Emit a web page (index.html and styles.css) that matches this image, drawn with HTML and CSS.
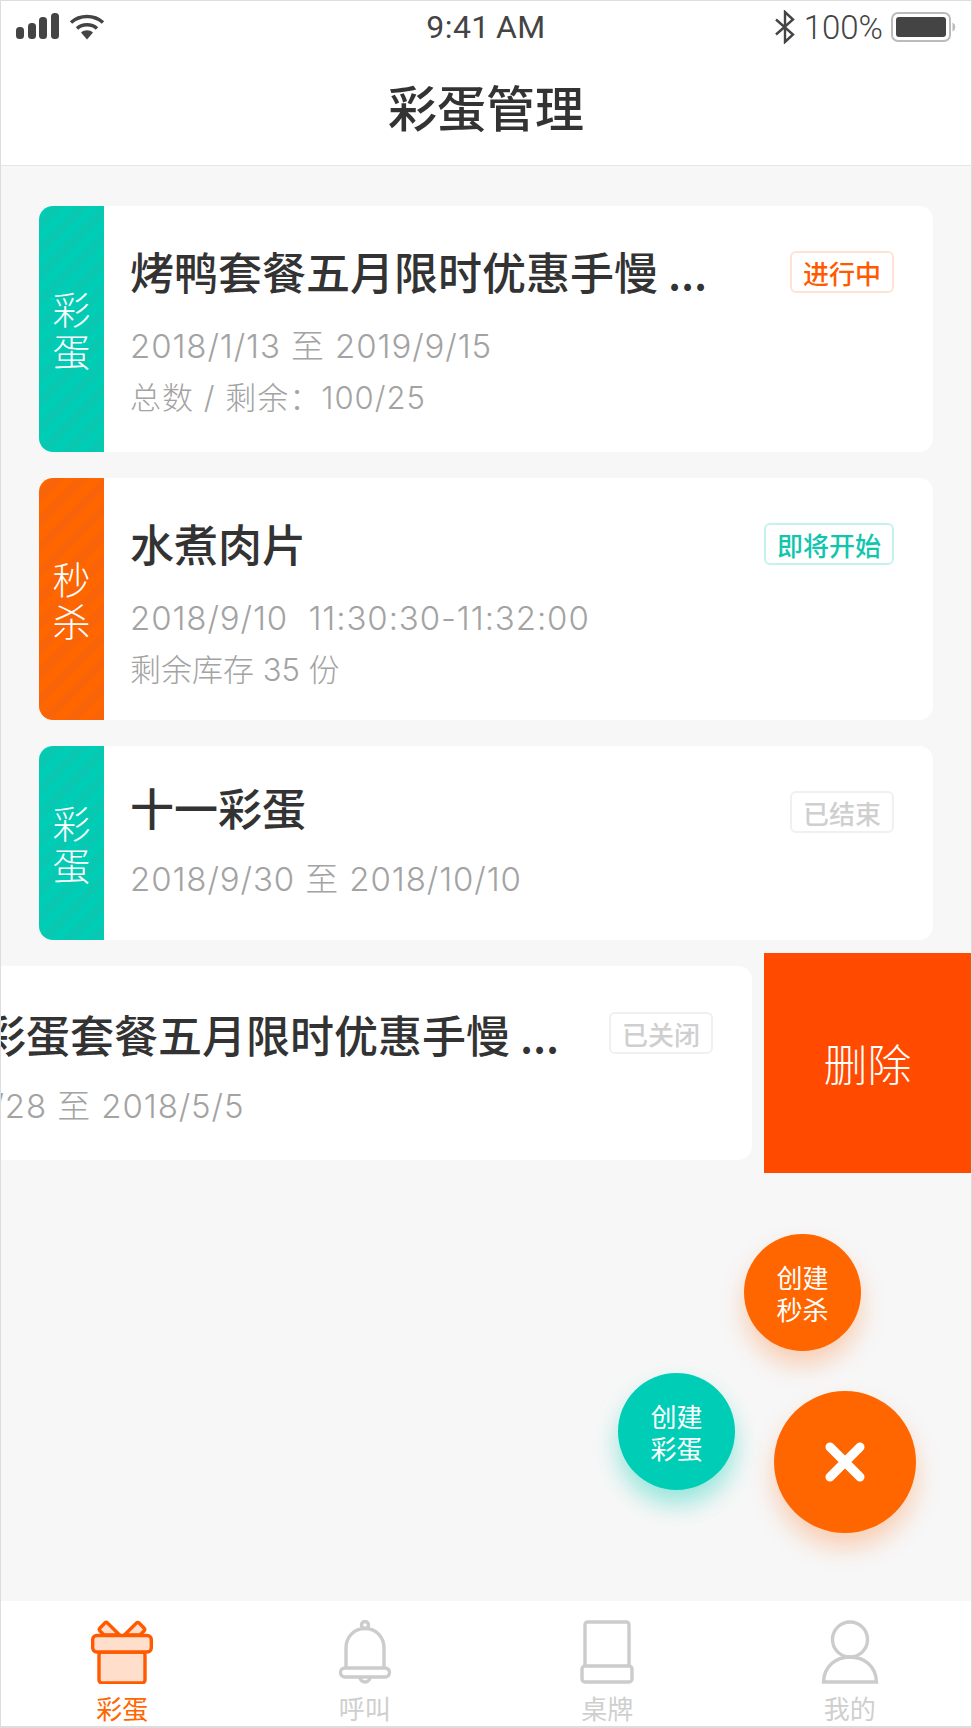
FILE: index.html
```html
<!DOCTYPE html>
<html lang="zh">
<head>
    <meta charset="UTF-8">
    <meta name="viewport" content="width=device-width, initial-scale=1.0">
    <title>彩蛋管理</title>
    <link rel="stylesheet" href="styles.css">
</head>
<body>
    <div class="app">
        <div class="statusbar">
            <div class="status-left">
                <svg class="icon-signal" width="46" height="28" viewBox="0 0 46 28">
                    <rect x="1" y="14" width="8" height="12" rx="3.5"/>
                    <rect x="13" y="10" width="8" height="16" rx="3.5"/>
                    <rect x="24" y="4" width="8" height="22" rx="3.5"/>
                    <rect x="36" y="0" width="8" height="26" rx="3.5"/>
                </svg>
                <svg class="icon-wifi" width="36" height="26" viewBox="0 0 36 26">
                    <path d="M2 8.5C11 .5 25 .5 34 8.5" fill="none" stroke="#444" stroke-width="3.6"/>
                    <path d="M8 14.5C13.500 9.500 22.500 9.500 28 14.500" fill="none" stroke="#444" stroke-width="3.6"/>
                    <path d="M12 18.500C15.500 15.500 20.500 15.500 24 18.500L18 25.500Z" fill="#444"/>
                </svg>
            </div>
            <div class="status-time">9:41 AM</div>
            <div class="status-right">
                <svg width="22" height="34" viewBox="0 0 22 34">
                    <path d="M2 9.500L19 24.500L11 32V2L19 9.500L2 24.500" fill="none" stroke="#444" stroke-width="2.400"/>
                </svg>
                <span class="status-battery">100%</span>
                <svg width="66" height="30" viewBox="0 0 66 30">
                    <rect x="1" y="1" width="58" height="28" rx="6" fill="none" stroke="#bbb" stroke-width="2"/>
                    <rect x="5" y="5" width="50" height="20" rx="3" fill="#444"/>
                    <path d="M61.500 10.500a5 5 0 0 1 0 9Z" fill="#bbb"/>
                </svg>
            </div>
        </div>

        <div class="navbar">彩蛋管理</div>

        <div class="list">
            <div class="card">
                <div class="card-tag tag-teal">彩<br>蛋</div>
                <div class="card-body">
                    <div class="card-head">
                        <div class="card-title">烤鸭套餐五月限时优惠手慢 ...</div>
                        <span class="badge badge-orange">进行中</span>
                    </div>
                    <div class="card-line card-date">2018/1/13 至 2019/9/15</div>
                    <div class="card-line card-count">总数 / 剩余：100/25</div>
                </div>
            </div>
            <div class="card card-compact">
                <div class="card-tag tag-orange">秒<br>杀</div>
                <div class="card-body">
                    <div class="card-head">
                        <div class="card-title">水煮肉片</div>
                        <span class="badge badge-teal">即将开始</span>
                    </div>
                    <div class="card-line card-date">2018/9/10&nbsp; 11:30:30-11:32:00</div>
                    <div class="card-line">剩余库存 35 份</div>
                </div>
            </div>
            <div class="card card-short">
                <div class="card-tag tag-teal">彩<br>蛋</div>
                <div class="card-body">
                    <div class="card-head">
                        <div class="card-title">十一彩蛋</div>
                        <span class="badge badge-grey">已结束</span>
                    </div>
                    <div class="card-line card-date">2018/9/30 至 2018/10/10</div>
                </div>
            </div>
            <div class="swipe-row">
                <div class="card card-short card-swiped">
                    <div class="card-tag tag-teal">彩<br>蛋</div>
                    <div class="card-body">
                        <div class="card-head">
                            <div class="card-title">彩蛋套餐五月限时优惠手慢 ...</div>
                            <span class="badge badge-grey">已关闭</span>
                        </div>
                        <div class="card-line card-date">2018/4/28 至 2018/5/5</div>
                    </div>
                </div>
                <div class="delete-btn">删除</div>
            </div>
        </div>

        <div class="fab fab-small fab-orange fab-seckill">创建<br>秒杀</div>
        <div class="fab fab-small fab-teal fab-egg">创建<br>彩蛋</div>
        <div class="fab fab-main fab-orange">
            <svg width="44" height="44" viewBox="0 0 44 44">
                <path d="M7 7L37 37M37 7L7 37" stroke="#fff" stroke-width="9" stroke-linecap="round"/>
            </svg>
        </div>

        <div class="tabbar">
            <div class="tab tab-active">
                <svg width="64" height="64" viewBox="-1 -1 64 64" fill="#ffdfcb" stroke="#ff5a00" stroke-width="3.400" stroke-linejoin="round">
                    <path d="M28.600 14L16.500 2Q15.200.7 13.900 2L9 7Q7.500 8.500 9 10L13 14Z"/>
                    <path d="M33.400 14L45.500 2Q46.800.7 48.100 2L53 7Q54.500 8.500 53 10L49 14Z"/>
                    <rect x="8" y="31" width="46" height="31" rx="3"/>
                    <rect x="1.700" y="14.500" width="58.600" height="16.500" rx="4"/>
                </svg>
                <span>彩蛋</span>
            </div>
            <div class="tab">
                <svg width="64" height="64" viewBox="0 0 64 64" fill="none" stroke="#ccc" stroke-width="3.400">
                    <circle cx="32" cy="5" r="3.500"/>
                    <path d="M13 48V28C13 17 21 8.500 32 8.500S51 17 51 28V48"/>
                    <rect x="7.500" y="48" width="49" height="9" rx="4.500"/>
                    <path d="M27 57a5 5 0 0 0 10 0"/>
                </svg>
                <span>呼叫</span>
            </div>
            <div class="tab">
                <svg width="64" height="64" viewBox="0 0 64 64" fill="none" stroke="#ccc" stroke-width="3.400">
                    <path d="M10 46V5Q10 2 13 2H51Q54 2 54 5V46"/>
                    <rect x="7" y="46" width="50" height="16" rx="3"/>
                </svg>
                <span>桌牌</span>
            </div>
            <div class="tab">
                <svg width="64" height="64" viewBox="0 0 64 64" fill="none" stroke="#ccc" stroke-width="3.400">
                    <circle cx="32" cy="19.500" r="17.500"/>
                    <path d="M5.500 62C6 46 18 37 32 37S58 46 58.500 62Z"/>
                </svg>
                <span>我的</span>
            </div>
        </div>
    </div>
</body>
</html>
```

FILE: styles.css
```css
* {
    box-sizing: border-box;
}
body {
    margin: 0;
    font-family: "Roboto", "Noto Sans CJK SC", sans-serif;
    color: #333;
}
.app {
    position: relative;
    display: flex;
    flex-direction: column;
    width: 972px;
    height: 1728px;
    overflow: hidden;
    background-color: #f7f7f7;
    border: 1px solid #ddd;
    border-bottom-width: 2px;
}

/* status bar */
.statusbar {
    display: grid;
    grid-template-columns: 1fr auto 1fr;
    align-items: center;
    height: 52px;
    padding: 0 14px;
    background-color: #fff;
}
.status-left {
    display: flex;
    align-items: center;
    gap: 8px;
}
.icon-signal {
    fill: #444;
}
.status-time {
    font-size: 32px;
    color: #444;
    letter-spacing: 0.4px;
    word-spacing: -2px;
}
.status-right {
    display: flex;
    justify-content: flex-end;
    align-items: center;
    gap: 8px;
}
.status-battery {
    font-size: 33px;
    font-weight: 300;
    color: #444;
}

.navbar {
    height: 113px;
    padding-bottom: 7px;
    display: flex;
    align-items: center;
    justify-content: center;
    font-family: "Noto Sans CJK SC", sans-serif;
    font-size: 49px;
    font-weight: 500;
    color: #333;
    background-color: #fff;
    border-bottom: 1px solid #e6e6e6;
}

/* list */
.list {
    flex: 1;
    display: flex;
    flex-direction: column;
    gap: 26px;
    padding: 40px 38px 0;
}
.card {
    display: flex;
    flex-shrink: 0;
    width: 894px;
    border-radius: 14px;
    overflow: hidden;
    background-color: #fff;
}
.card-tag {
    flex: 0 0 65px;
    display: flex;
    align-items: center;
    justify-content: center;
    text-align: center;
    font-family: "Noto Sans CJK SC", sans-serif;
    font-size: 38px;
    font-weight: 300;
    line-height: 42px;
    color: #fff;
}
.tag-teal {
    background: repeating-linear-gradient(135deg, #00cdb5 0, #00cdb5 9px, #08c8b1 9px, #08c8b1 18px);
}
.tag-orange {
    background: repeating-linear-gradient(135deg, #ff6600 0, #ff6600 9px, #f86407 9px, #f86407 18px);
}
.card-body {
    flex: 1;
    min-width: 0;
    padding: 35px 39px 28px 26px;
}
.card-compact .card-body {
    padding-bottom: 24px;
}
.card-short .card-body {
    padding-top: 31px;
    padding-bottom: 35px;
}
.card-head {
    display: flex;
    justify-content: space-between;
    align-items: flex-start;
    margin-bottom: 19px;
}
.card-short .card-head {
    margin-bottom: 16px;
}
.card-title {
    font-family: "Noto Sans CJK SC", sans-serif;
    font-size: 44px;
    font-weight: 500;
    line-height: 60px;
    color: #333;
}
.card-line {
    font-family: "Inter", "Noto Sans CJK SC", sans-serif;
    font-size: 31px;
    font-weight: 300;
    line-height: 52px;
    color: #a3a3a3;
    white-space: nowrap;
}
.card-date {
    font-size: 33px;
    letter-spacing: 0.9px;
}
.card-count {
    letter-spacing: 1px;
}
.badge {
    margin-top: 10px;
    padding: 0 11px;
    height: 42px;
    display: flex;
    align-items: center;
    font-family: "Noto Sans CJK SC", sans-serif;
    font-size: 26px;
    font-weight: 500;
    border-width: 2px;
    border-style: solid;
    border-radius: 6px;
}
.card-short .badge {
    margin-top: 14px;
}
.badge-orange {
    color: #ff5a00;
    border-color: #ffe3d2;
}
.badge-teal {
    color: #12c6ae;
    border-color: #c4f3ec;
}
.badge-grey {
    color: #cfcfcf;
    border-color: #f0f0f0;
}
.swipe-row {
    display: flex;
    justify-content: flex-end;
    align-items: center;
    gap: 12px;
    margin: -13px -38px 0;
}
.card-swiped .card-body {
    padding-top: 38px;
    padding-bottom: 28px;
}
.card-swiped .badge {
    margin-top: 8px;
}
/* this row is dragged left, its text sits clipped at the screen edge */
.card-swiped .card-title {
    margin-left: 33px;
}
.card-swiped .card-line {
    margin-left: -68px;
}
.delete-btn {
    flex: 0 0 207px;
    height: 220px;
    display: flex;
    align-items: center;
    justify-content: center;
    font-family: "Noto Sans CJK SC", sans-serif;
    font-size: 44px;
    font-weight: 300;
    color: #fff;
    background-color: #ff4a00;
}

/* floating buttons */
.fab {
    position: absolute;
    display: flex;
    align-items: center;
    justify-content: center;
    border-radius: 50%;
    text-align: center;
    color: #fff;
    font-family: "Noto Sans CJK SC", sans-serif;
    font-size: 26px;
    line-height: 32px;
}
.fab-small {
    width: 117px;
    height: 117px;
}
.fab-orange {
    background-color: #ff6600;
    box-shadow: 0 14px 24px rgba(255, 102, 0, 0.28);
}
.fab-teal {
    background-color: #00cdb5;
    box-shadow: 0 14px 24px rgba(0, 205, 181, 0.4);
}
.fab-seckill {
    left: 743px;
    top: 1233px;
}
.fab-egg {
    left: 617px;
    top: 1372px;
}
.fab-main {
    left: 773px;
    top: 1390px;
    width: 142px;
    height: 142px;
}

/* tab bar */
.tabbar {
    display: grid;
    grid-template-columns: repeat(4, 1fr);
    height: 125px;
    background-color: #fff;
}
.tab {
    display: flex;
    flex-direction: column;
    align-items: center;
    padding-top: 19px;
    font-family: "Noto Sans CJK SC", sans-serif;
    font-size: 26px;
    line-height: 32px;
    color: #cfcfcf;
}
.tab svg {
    margin-bottom: 8px;
}
.tab-active {
    color: #ff6600;
}
```
